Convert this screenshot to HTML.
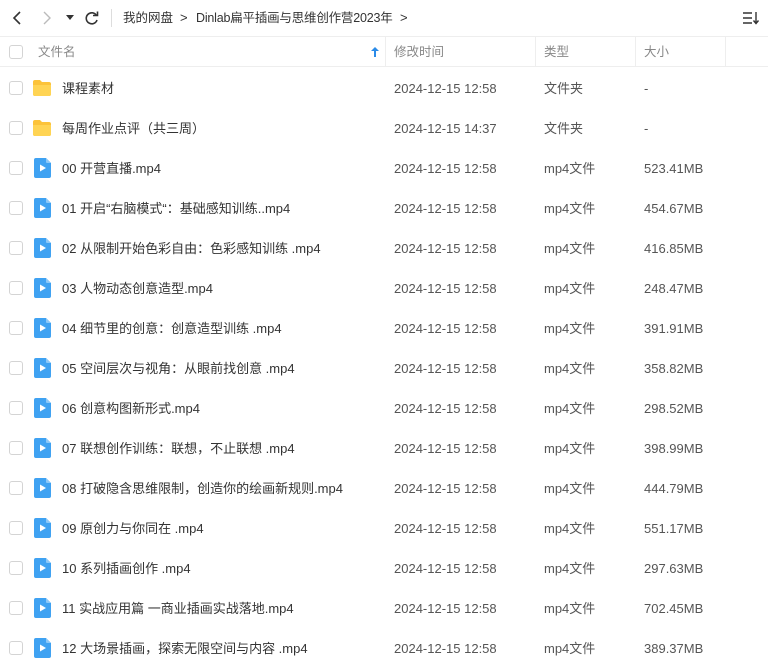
<!DOCTYPE html>
<html><head><meta charset="utf-8"><style>
*{margin:0;padding:0;box-sizing:border-box}
body{width:768px;height:668px;overflow:hidden;background:#fff;font-family:"Liberation Sans","Noto Sans CJK SC",sans-serif;color:#333;font-size:13px;position:relative}
.top{position:absolute;top:0;left:0;width:768px;height:37px;border-bottom:1px solid #eee}
.abs{position:absolute}
.top span{position:absolute;top:0;line-height:36px;white-space:nowrap}
.hdr{position:absolute;top:37px;left:0;width:768px;height:30px;border-bottom:1px solid #eee;color:#888;font-size:12.5px}
.hdr span{position:absolute;top:0;line-height:30px}
.sep{position:absolute;top:0;width:1px;height:30px;background:#eee}
.cb{position:absolute;left:9px;width:14px;height:14px;border:1px solid #d4d4d4;border-radius:3px;background:#fff}
.row{position:absolute;left:0;width:768px;height:40px}
.row span{position:absolute;top:1px;line-height:40px;white-space:nowrap}
.n{left:62px;color:#333}
.d{left:394px;color:#555}
.t{left:544px;color:#555}
.s{left:644px;color:#555}
</style></head><body>
<div class="top">
<svg class="abs" style="left:10px;top:10px" width="14" height="16"><path d="M10 2L4 8L10 14" fill="none" stroke="#333" stroke-width="1.6"/></svg>
<svg class="abs" style="left:40px;top:10px" width="14" height="16"><path d="M4 2L10 8L4 14" fill="none" stroke="#bbb" stroke-width="1.4"/></svg>
<svg class="abs" style="left:66px;top:15px" width="9" height="7"><path d="M0 0H8L4 5Z" fill="#333"/></svg>
<svg class="abs" style="left:84px;top:10px" width="16" height="16"><path d="M12.5 5.5A5.5 5.5 0 1 0 13 10" fill="none" stroke="#333" stroke-width="1.6"/><path d="M9 5.5H13.5V1.5" fill="none" stroke="#333" stroke-width="1.6"/></svg>
<div class="abs" style="left:111px;top:9px;width:1px;height:18px;background:#ddd"></div>
<span style="left:123px;font-size:12.5px">我的网盘</span>
<span style="left:180px">&gt;</span>
<span style="left:196px;font-size:12.5px;letter-spacing:-0.2px">Dinlab扁平插画与思维创作营2023年</span>
<span style="left:400px">&gt;</span>
<svg class="abs" style="left:742px;top:11px" width="18" height="14"><path d="M1 2H10M1 7H10M1 12H10" stroke="#333" stroke-width="1.4"/><path d="M14 1V12M11.5 9.5L14 12.5L16.5 9.5" fill="none" stroke="#333" stroke-width="1.4"/></svg>
</div>
<div class="hdr">
<div class="cb" style="top:8px"></div>
<span style="left:38px">文件名</span>
<svg class="abs" style="left:371px;top:10px" width="8" height="10"><path d="M4 0L8 4H5V10H3V4H0Z" fill="#2b8be8"/></svg>
<div class="sep" style="left:385px"></div><span style="left:394px">修改时间</span>
<div class="sep" style="left:535px"></div><span style="left:544px">类型</span>
<div class="sep" style="left:635px"></div><span style="left:644px">大小</span>
<div class="sep" style="left:725px"></div>
</div>
<div id="rows"></div>
<script>
var R=[["课程素材","2024-12-15 12:58","文件夹","-",1],["每周作业点评（共三周）","2024-12-15 14:37","文件夹","-",1],
["00 开营直播.mp4","2024-12-15 12:58","mp4文件","523.41MB"],["01 开启“右脑模式“：基础感知训练..mp4","2024-12-15 12:58","mp4文件","454.67MB"],
["02 从限制开始色彩自由：色彩感知训练 .mp4","2024-12-15 12:58","mp4文件","416.85MB"],["03 人物动态创意造型.mp4","2024-12-15 12:58","mp4文件","248.47MB"],
["04 细节里的创意：创意造型训练 .mp4","2024-12-15 12:58","mp4文件","391.91MB"],["05 空间层次与视角：从眼前找创意 .mp4","2024-12-15 12:58","mp4文件","358.82MB"],
["06 创意构图新形式.mp4","2024-12-15 12:58","mp4文件","298.52MB"],["07 联想创作训练：联想，不止联想 .mp4","2024-12-15 12:58","mp4文件","398.99MB"],
["08 打破隐含思维限制，创造你的绘画新规则.mp4","2024-12-15 12:58","mp4文件","444.79MB"],["09 原创力与你同在 .mp4","2024-12-15 12:58","mp4文件","551.17MB"],
["10 系列插画创作 .mp4","2024-12-15 12:58","mp4文件","297.63MB"],["11 实战应用篇 一商业插画实战落地.mp4","2024-12-15 12:58","mp4文件","702.45MB"],
["12 大场景插画，探索无限空间与内容 .mp4","2024-12-15 12:58","mp4文件","389.37MB"]];
var h="";R.forEach(function(r,i){var top=68+40*i;
var ic=r[4]?'<svg style="position:absolute;left:32px;top:11px" width="20" height="18"><path d="M1 3Q1 1 3 1H8L10 3H17Q19 3 19 5V15Q19 17 17 17H3Q1 17 1 15Z" fill="#fcc33a"/><path d="M1 6H19V15Q19 17 17 17H3Q1 17 1 15Z" fill="#ffd454"/></svg>'
:'<svg style="position:absolute;left:34px;top:10px" width="17" height="20"><path d="M2 0H12L17 5V18Q17 20 15 20H2Q0 20 0 18V2Q0 0 2 0Z" fill="#3fa2f2"/><path d="M12 0V4Q12 5 13 5H17Z" fill="#8cc8f8"/><path d="M6 6.5L12 10L6 13.5Z" fill="#fff"/></svg>';
h+='<div class="row" style="top:'+top+'px"><div class="cb" style="top:13px"></div>'+ic+'<span class="n">'+r[0]+'</span><span class="d">'+r[1]+'</span><span class="t">'+r[2]+'</span><span class="s">'+r[3]+'</span></div>';});
document.getElementById("rows").innerHTML=h;
</script>
</body></html>
